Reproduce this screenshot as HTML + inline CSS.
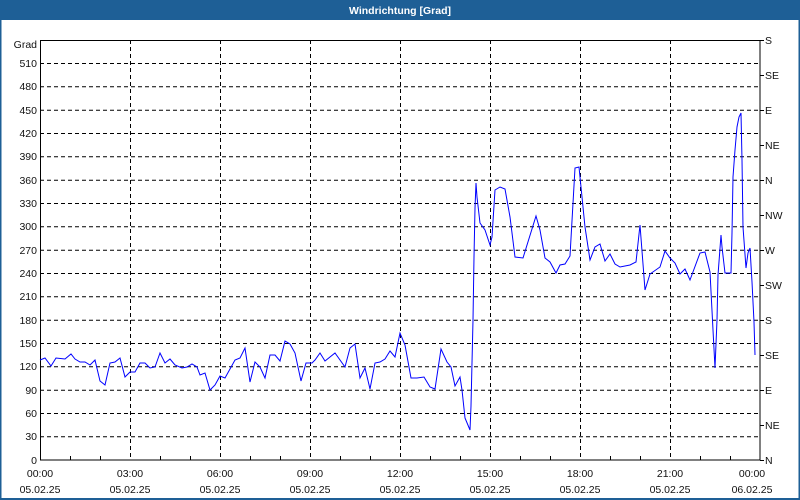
<!DOCTYPE html>
<html><head><meta charset="utf-8"><style>
html,body{margin:0;padding:0;background:#fff;}
svg{display:block;}
text{font-family:"Liberation Sans",sans-serif;font-size:10.5px;fill:#111;}
</style></head><body>
<svg width="800" height="500" xmlns="http://www.w3.org/2000/svg">
<rect x="0" y="0" width="800" height="500" fill="#fff"/>
<rect x="0" y="0" width="800" height="20" fill="#1e5f96"/>
<rect x="0" y="0" width="1.5" height="500" fill="#1e5f96"/>
<rect x="798.5" y="0" width="1.5" height="500" fill="#1e5f96"/>
<rect x="0" y="498" width="800" height="2" fill="#1e5f96"/>
<text x="400" y="14" text-anchor="middle" style="fill:#fff;font-weight:bold;font-size:10.5px">Windrichtung [Grad]</text>
<g stroke="#000" stroke-width="1" stroke-dasharray="4,3" fill="none">
<path d="M40 63.5H760M40 86.8H760M40 110.2H760M40 133.5H760M40 156.8H760M40 180.2H760M40 203.5H760M40 226.8H760M40 250.2H760M40 273.5H760M40 296.8H760M40 320.2H760M40 343.5H760M40 366.8H760M40 390.2H760M40 413.5H760M40 436.8H760"/>
<path d="M130.5 40V460M220.5 40V460M310.5 40V460M400.5 40V460M490.5 40V460M580.5 40V460M670.5 40V460"/>
</g>
<g stroke="#000" stroke-width="1" fill="none">
<rect x="40.5" y="40.5" width="719.5" height="419.5"/>
<path d="M70.5 460V456M100.5 460V456M160.5 460V456M190.5 460V456M250.5 460V456M280.5 460V456M340.5 460V456M370.5 460V456M430.5 460V456M460.5 460V456M520.5 460V456M550.5 460V456M610.5 460V456M640.5 460V456M700.5 460V456M730.5 460V456"/>
<path d="M760 40.5h4M760 75.5h4M760 110.5h4M760 145.5h4M760 180.5h4M760 215.5h4M760 250.5h4M760 285.5h4M760 320.5h4M760 355.5h4M760 390.5h4M760 425.5h4M760 460.5h4"/>
</g>
<g text-anchor="end">
<text x="37" y="48">Grad</text>
<text x="37" y="67">510</text><text x="37" y="90">480</text><text x="37" y="114">450</text><text x="37" y="137">420</text><text x="37" y="160">390</text><text x="37" y="184">360</text><text x="37" y="207">330</text><text x="37" y="230">300</text><text x="37" y="254">270</text><text x="37" y="277">240</text><text x="37" y="300">210</text><text x="37" y="324">180</text><text x="37" y="347">150</text><text x="37" y="370">120</text><text x="37" y="394">90</text><text x="37" y="417">60</text><text x="37" y="440">30</text><text x="37" y="464">0</text>
</g>
<g>
<text x="765" y="44">S</text><text x="765" y="79">SE</text><text x="765" y="114">E</text><text x="765" y="149">NE</text><text x="765" y="184">N</text><text x="765" y="219">NW</text><text x="765" y="254">W</text><text x="765" y="289">SW</text><text x="765" y="324">S</text><text x="765" y="359">SE</text><text x="765" y="394">E</text><text x="765" y="429">NE</text><text x="765" y="464">N</text>
</g>
<g text-anchor="middle">
<text x="40" y="477">00:00</text><text x="130" y="477">03:00</text><text x="220" y="477">06:00</text><text x="310" y="477">09:00</text><text x="400" y="477">12:00</text><text x="490" y="477">15:00</text><text x="580" y="477">18:00</text><text x="670" y="477">21:00</text><text x="752" y="477">00:00</text>
<text x="40" y="493">05.02.25</text><text x="130" y="493">05.02.25</text><text x="220" y="493">05.02.25</text><text x="310" y="493">05.02.25</text><text x="400" y="493">05.02.25</text><text x="490" y="493">05.02.25</text><text x="580" y="493">05.02.25</text><text x="670" y="493">05.02.25</text><text x="752" y="493">06.02.25</text>
</g>
<polyline fill="none" stroke="#0000ff" stroke-width="1" points="40,360 45,358 51,366 56,358 65,359 71,354 75,359 80,362 85,362 90,365 95,360 100,381 105,385 110,363 115,362 120,358 125,377 130,372 135,372 140,363 145,363 150,368 155,367 160,353 165,363 170,359 175,365 182,368 187,367 192,364 197,367 200,375 205,373 210,390 215,385 220,376 225,378 230,369 235,360 240,358 245,348 250,382 255,362 260,367 265,378 270,355 275,355 280,361 285,341 290,344 295,353 301,381 306,363 312,363 315,360 320,353 325,361 335,353 345,367 350,348 355,344 360,378 365,368 370,389 375,363 380,362 385,359 390,351 395,357 400,333 405,345 411,378 417,378 424,377 430,387 435,389 441,349 447,362 451,367 455,386 460,377 462,390 465,418 470,430 471,406 473,320 474,257 475,208 476,183 477,197 480,223 485,230 490,245 492,237 495,190 500,187 505,189 510,217 515,257 523,258 536,216 540,230 545,258 550,262 556,273 560,265 565,264 570,256 575,168 579,167 585,227 590,260 595,247 600,244 605,261 610,254 615,264 620,267 630,265 636,262 640,225 645,290 650,274 660,267 665,251 670,258 675,263 680,274 685,269 690,280 700,253 705,252 710,272 713,330 715,368 717,320 718,275 721,235 722,247 725,273 731,273 732,233 733,177 735,150 737,127 739,117 741,113 742,160 743,227 746,268 748,253 750,248 752,282 754,322 755,355"/>
</svg>
</body></html>
